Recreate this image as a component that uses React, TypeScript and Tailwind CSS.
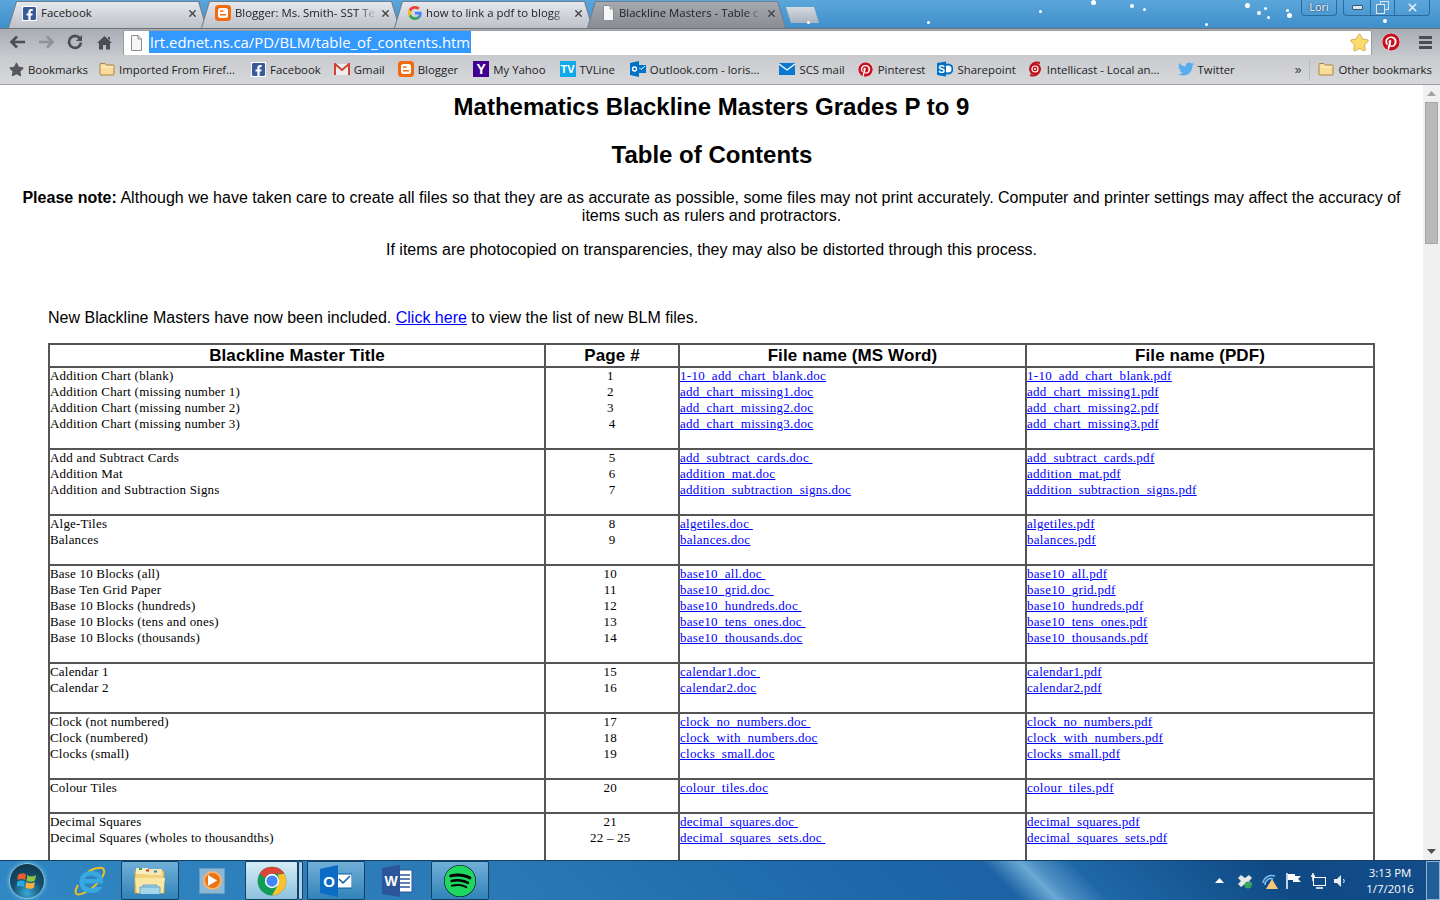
import React from 'react';
import { FaFacebookSquare, FaPinterest, FaTwitter, FaStar, FaSpotify } from 'react-icons/fa';
import { FaXmark } from 'react-icons/fa6';

type Row = { titles: string[]; pages: string[]; docs: string[]; pdfs: string[] };

const rows: Row[] = [
  {
    titles: ['Addition Chart (blank)', 'Addition Chart (missing number 1)', 'Addition Chart (missing number 2)', 'Addition Chart (missing number 3)'],
    pages: ['1 ', '2 ', '3 ', '4'],
    docs: ['1-10_add_chart_blank.doc', 'add_chart_missing1.doc', 'add_chart_missing2.doc', 'add_chart_missing3.doc'],
    pdfs: ['1-10_add_chart_blank.pdf', 'add_chart_missing1.pdf', 'add_chart_missing2.pdf', 'add_chart_missing3.pdf'],
  },
  {
    titles: ['Add and Subtract Cards', 'Addition Mat', 'Addition and Subtraction Signs'],
    pages: ['5', '6', '7'],
    docs: ['add_subtract_cards.doc ', 'addition_mat.doc', 'addition_subtraction_signs.doc'],
    pdfs: ['add_subtract_cards.pdf', 'addition_mat.pdf', 'addition_subtraction_signs.pdf'],
  },
  {
    titles: ['Alge-Tiles', 'Balances'],
    pages: ['8', '9'],
    docs: ['algetiles.doc ', 'balances.doc'],
    pdfs: ['algetiles.pdf', 'balances.pdf'],
  },
  {
    titles: ['Base 10 Blocks (all)', 'Base Ten Grid Paper', 'Base 10 Blocks (hundreds)', 'Base 10 Blocks (tens and ones)', 'Base 10 Blocks (thousands)'],
    pages: ['10 ', '11 ', '12 ', '13 ', '14 '],
    docs: ['base10_all.doc ', 'base10_grid.doc ', 'base10_hundreds.doc ', 'base10_tens_ones.doc ', 'base10_thousands.doc'],
    pdfs: ['base10_all.pdf', 'base10_grid.pdf', 'base10_hundreds.pdf', 'base10_tens_ones.pdf', 'base10_thousands.pdf'],
  },
  {
    titles: ['Calendar 1', 'Calendar 2'],
    pages: ['15 ', '16 '],
    docs: ['calendar1.doc ', 'calendar2.doc'],
    pdfs: ['calendar1.pdf', 'calendar2.pdf'],
  },
  {
    titles: ['Clock (not numbered)', 'Clock (numbered)', 'Clocks (small)'],
    pages: ['17 ', '18 ', '19 '],
    docs: ['clock_no_numbers.doc ', 'clock_with_numbers.doc', 'clocks_small.doc'],
    pdfs: ['clock_no_numbers.pdf', 'clock_with_numbers.pdf', 'clocks_small.pdf'],
  },
  {
    titles: ['Colour Tiles'],
    pages: ['20 '],
    docs: ['colour_tiles.doc'],
    pdfs: ['colour_tiles.pdf'],
  },
  {
    titles: ['Decimal Squares', 'Decimal Squares (wholes to thousandths)'],
    pages: ['21 ', '22 – 25 '],
    docs: ['decimal_squares.doc ', 'decimal_squares_sets.doc '],
    pdfs: ['decimal_squares.pdf', 'decimal_squares_sets.pdf'],
  },
];

const Folder = () => (
  <svg width="16" height="14" viewBox="0 0 16 14" className="shrink-0">
    <path d="M1 2.5 Q1 1.5 2 1.5 H6 L7.5 3 H14 Q15 3 15 4 V12 Q15 13 14 13 H2 Q1 13 1 12 Z" fill="#f9dc9a" stroke="#a8843f" />
    <path d="M1.5 5 H14.5" stroke="#fff3cf" />
  </svg>
);

const GoogleG = () => (
  <svg width="14" height="14" viewBox="0 0 48 48" className="shrink-0">
    <path fill="#EA4335" d="M24 9.5c3.5 0 6.7 1.3 9.2 3.6l6.8-6.8C35.900 2.400 30.500 0 24 0 14.600 0 6.500 5.400 2.600 13.200l8 6.200C12.400 13.600 17.700 9.500 24 9.500z" />
    <path fill="#4285F4" d="M46.900 24.500c0-1.600-.1-3.100-.4-4.500H24v9h12.900c-.6 3-2.200 5.500-4.700 7.200l7.700 6c4.500-4.200 7-10.300 7-17.700z" />
    <path fill="#FBBC05" d="M10.600 28.600c-.5-1.400-.8-3-.8-4.600s.3-3.200.8-4.600l-8-6.200C.9 16.500 0 20.100 0 24s.9 7.500 2.600 10.800l8-6.200z" />
    <path fill="#34A853" d="M24 48c6.500 0 11.900-2.100 15.900-5.800l-7.700-6c-2.200 1.500-4.900 2.300-8.200 2.300-6.300 0-11.600-4.100-13.400-9.900l-8 6.200C6.500 42.600 14.600 48 24 48z" />
  </svg>
);

const BloggerIcon = () => (
  <svg width="16" height="16" viewBox="0 0 16 16" className="shrink-0">
    <rect width="16" height="16" rx="3.500" fill="#f26a0f" />
    <rect x="3" y="3" width="10" height="10" rx="2.500" fill="#fff" />
    <rect x="5" y="5.300" width="3.500" height="1.500" fill="#f26a0f" />
    <rect x="5" y="9" width="6" height="1.500" fill="#f26a0f" />
  </svg>
);

const PageIcon = ({ size = 14 }: { size?: number }) => (
  <svg width={size} height={size + 2} viewBox="0 0 14 16" className="shrink-0">
    <path d="M2.500 .5 H9 L12.500 4 V15.500 H2.500 Z" fill="#f7f7f7" stroke="#8c8c8c" />
    <path d="M9 .5 V4 H12.500" fill="none" stroke="#8c8c8c" />
  </svg>
);

const GmailIcon = () => (
  <svg width="16" height="13" viewBox="0 0 16 13" className="shrink-0">
    <rect x="1" y="1" width="14" height="11" fill="#eee" />
    <path d="M1 12 V1 L8 7 L15 1 V12" fill="none" stroke="#d2402f" strokeWidth="2" />
  </svg>
);

const OutlookSmall = () => (
  <svg width="16" height="16" viewBox="0 0 16 16" className="shrink-0">
    <rect x="7" y="4" width="9" height="8" fill="#0072c6" />
    <path d="M9 6.500 L11 8.500 L15 5" stroke="#fff" fill="none" />
    <path d="M0 2 L9 0 V16 L0 14 Z" fill="#0072c6" />
    <circle cx="4.500" cy="8" r="2" fill="none" stroke="#fff" strokeWidth="1.400" />
  </svg>
);

const SharepointIcon = () => (
  <svg width="16" height="16" viewBox="0 0 16 16" className="shrink-0">
    <circle cx="11" cy="8" r="4.500" fill="#fff" stroke="#0072c6" strokeWidth="2" />
    <path d="M0 2 L9 .5 V15.500 L0 14 Z" fill="#0072c6" />
    <text x="4.500" y="11.500" textAnchor="middle" fontSize="10" fontWeight="700" fill="#fff" fontFamily="Liberation Sans, sans-serif">S</text>
  </svg>
);

const MailIcon = () => (
  <svg width="16" height="12" viewBox="0 0 16 12" className="shrink-0">
    <rect width="16" height="12" fill="#0a78d0" />
    <path d="M0 1 L8 7 L16 1" fill="none" stroke="#fff" strokeWidth="1.300" />
  </svg>
);

const TvLineIcon = () => (
  <div className="w-4 h-4 shrink-0 bg-[#12a9e8] text-white text-[11px] font-bold leading-4 text-center font-['Liberation_Sans',sans-serif]">TV</div>
);

const YahooIcon = () => (
  <div className="w-4 h-4 shrink-0 bg-[#400090] text-white text-[14px] font-bold leading-4 text-center font-['Liberation_Sans',sans-serif]">Y</div>
);

const IntellicastIcon = () => (
  <svg width="14" height="16" viewBox="0 0 14 16" className="shrink-0">
    <circle cx="7" cy="8" r="6" fill="#c1121c" />
    <path d="M12 2 Q6 0 3 5 M2 14 Q8 16 11 11" stroke="#c1121c" strokeWidth="2" fill="none" />
    <circle cx="7" cy="8" r="3" fill="none" stroke="#fff" strokeWidth="1.200" />
    <circle cx="7" cy="8" r="1" fill="#fff" />
  </svg>
);

const ChromeLogo = () => (
  <svg width="30" height="30" viewBox="0 0 48 48">
    <circle cx="24" cy="24" r="23" fill="#0f9d58" />
    <path d="M4.100 12.500 A23 23 0 0 1 43.900 12.500 L24 12.500 Q16 13 13 19 Z" fill="#db4437" />
    <path d="M43.900 12.500 A23 23 0 0 1 24 47 L34 29 Q37 20 33 14 Z" fill="#fbc02d" />
    <circle cx="24" cy="24" r="11.500" fill="#fff" />
    <circle cx="24" cy="24" r="9" fill="#4285f4" />
  </svg>
);

const StartOrb = () => (
  <div className="w-9 h-9 rounded-full border border-[#8fc3dd] bg-[radial-gradient(circle_at_50%_85%,#39a9d6_0%,#14506f_45%,#0f2f3f_100%)] flex items-center justify-center shadow-[0_0_4px_#6fc0e8]">
    <svg width="20" height="18" viewBox="0 0 20 18">
      <path d="M1 3 Q5 0 9 2.500 L8 8 Q4.500 6 .5 8 Z" fill="#f0592a" />
      <path d="M10.500 3 Q14 6 19 3 L18 8.500 Q13.500 11 9.500 8.500 Z" fill="#8cc63f" />
      <path d="M.3 9.500 Q4 7.500 7.700 9.500 L7 15 Q3.500 13 -.5 15 Z" fill="#29abe2" />
      <path d="M9.200 10 Q13.500 12.500 17.700 10 L17 15.500 Q13 18 8.300 15.500 Z" fill="#fbb03b" />
    </svg>
  </div>
);

const IeLogo = () => (
  <svg width="32" height="32" viewBox="0 0 32 32">
    <path d="M25 3 Q31 2 30 8 Q28 15 17 24 Q6 31 2.500 29 Q0 27 4 20" fill="none" stroke="#f0c020" strokeWidth="2" />
    <path d="M25 3 Q20 3 14 7" fill="none" stroke="#f0c020" strokeWidth="2" />
    <path d="M10 18.500 H29 Q29.500 6 18 6 Q6 6 5.500 17 Q6 28 18 28 Q25 28 28 22 H21 Q18.500 24 16 23 Q11 22 10 18.500 Z M10.500 14 Q12 10.500 17 10.500 Q22 10.500 23.500 14 Z" fill="#37a8e0" fillRule="evenodd" />
  </svg>
);

const ExplorerIcon = () => (
  <svg width="32" height="30" viewBox="0 0 32 30">
    <path d="M1 5 H30 V27 H1 Z" fill="#f2d37d" stroke="#c8a552" />
    <path d="M2 2 H14 V8 H2 Z" fill="#f9edc4" />
    <path d="M14 3 H28 V9 H14 Z" fill="#f6e6b0" />
    <rect x="5" y="2" width="3" height="2" fill="#3aa655" />
    <rect x="12" y="3.500" width="3" height="2" fill="#c8432f" />
    <rect x="20" y="4.500" width="3" height="2" fill="#3b84c9" />
    <path d="M1 12 H31 L29 27 H3 Z" fill="#fbe7a5" />
    <path d="M6 28 V21 H26 V28 M9 21 V19 H23 V21" fill="#a5d5ea" stroke="#6aa7c4" />
  </svg>
);

const MediaIcon = () => (
  <div className="w-[26px] h-[26px] bg-[#8ab8d8] border border-[#6a9abc] flex items-center justify-center">
    <div className="w-[19px] h-[19px] rounded-full bg-[#ea7415] border-2 border-[#f7b26e] flex items-center justify-center">
      <svg width="9" height="11" viewBox="0 0 9 11"><path d="M0 0 L9 5.500 L0 11 Z" fill="#fff" /></svg>
    </div>
  </div>
);

const OutlookBig = () => (
  <svg width="32" height="32" viewBox="0 0 32 32">
    <rect x="17" y="9" width="15" height="14" fill="#fff" stroke="#0a5ea8" />
    <path d="M19 14 L23 18 L30 11" fill="none" stroke="#0a5ea8" strokeWidth="1.500" />
    <path d="M0 4 L18 0 V32 L0 28 Z" fill="#0a6cc4" />
    <text x="9" y="21.500" textAnchor="middle" fontSize="15" fontWeight="700" fill="#fff" fontFamily="Liberation Sans, sans-serif">O</text>
  </svg>
);

const WordBig = () => (
  <svg width="32" height="32" viewBox="0 0 32 32">
    <rect x="15" y="5" width="15" height="22" fill="#fff" stroke="#2b579a" />
    <path d="M18 10 H28 M18 14 H28 M18 18 H28 M18 22 H28" stroke="#2b579a" strokeWidth="1.500" />
    <path d="M0 3 L18 0 V32 L0 29 Z" fill="#2b579a" />
    <text x="9" y="21" textAnchor="middle" fontSize="14" fontWeight="700" fill="#fff" fontFamily="Liberation Sans, sans-serif">W</text>
  </svg>
);

const Tab = ({ icon, label, active, fade }: { icon: React.ReactNode; label: string; active?: boolean; fade?: boolean }) => (
  <div className="w-[199px] -mr-[6px] h-[27px] shrink-0 bg-[#6f7f8f] [clip-path:polygon(0_100%,4%_0,96%_0,100%_100%)] relative">
    <div
      className={`absolute inset-x-px top-px bottom-0 [clip-path:polygon(0_100%,4%_0,96%_0,100%_100%)] flex items-center pb-[4px] pl-[13px] pr-[8px] gap-[4px] ${
        active ? 'bg-gradient-to-b from-[#a6a9af] to-[#898c93]' : 'bg-gradient-to-b from-[#e4e7ec] to-[#bec2c9]'
      }`}
    >
      {icon}
      <span
        className={`flex-1 whitespace-nowrap text-[11.4px] text-[#222] font-['Open_Sans',sans-serif] ${
          fade ? '[mask-image:linear-gradient(to_right,black_88%,transparent)]' : ''
        }`}
      >
        {label}
      </span>
      <FaXmark className="w-[11px] h-[11px] text-[#444] shrink-0" />
    </div>
  </div>
);

const Bookmark = ({ icon, label, className = '' }: { icon: React.ReactNode; label: string; className?: string }) => (
  <div className={`flex items-center gap-[4px] shrink-0 text-[11.4px] text-[#222] whitespace-nowrap font-['Open_Sans',sans-serif] ${className}`}>
    <div className="w-4 flex justify-center">{icon}</div>
    <span>{label}</span>
  </div>
);

const TaskButton = ({ children, active, w = 'w-[58px]' }: { children: React.ReactNode; active?: boolean; w?: string }) => (
  <div
    className={`${w} h-[39px] shrink-0 rounded-[2px] border border-[#143f66] flex items-center justify-center ${
      active ? 'bg-gradient-to-b from-[#d6edf8] to-[#8cc0de]' : 'bg-gradient-to-b from-[#70b0d8] to-[#2f82b8]'
    }`}
  >
    {children}
  </div>
);

const Stack = ({ items, center }: { items: string[]; center?: boolean }) => (
  <td className={`p-0 pb-[16px] align-top border-2 border-[#555] ${center ? 'text-center' : ''}`}>
    {items.map((t, i) => (
      <div key={i} className="h-[16px] leading-[16px] whitespace-pre">
        {t}
      </div>
    ))}
  </td>
);

const Links = ({ items }: { items: string[] }) => (
  <td className="p-0 pb-[16px] align-top border-2 border-[#555]">
    {items.map((t, i) => (
      <div key={i} className="h-[16px] leading-[16px] whitespace-pre tracking-[0.3px]">
        <a href="#" className="text-[#0000ff] underline">
          {t}
        </a>
      </div>
    ))}
  </td>
);

export default function App() {
  return (
    <div className="w-[1440px] h-[900px] overflow-hidden flex flex-col bg-white font-['Liberation_Sans',sans-serif]">
      {/* Chrome frame and tabs */}
      <div className="h-[28px] shrink-0 bg-gradient-to-b from-[#5ba6db] to-[#3f8fcb] flex items-end pl-[8px] relative">
        <Tab icon={<FaFacebookSquare className="w-[15px] h-[15px] text-[#3b5998] bg-white shrink-0" />} label="Facebook" />
        <Tab icon={<BloggerIcon />} label="Blogger: Ms. Smith- SST Te" fade />
        <Tab icon={<GoogleG />} label="how to link a pdf to blogg" fade />
        <Tab icon={<PageIcon />} label="Blackline Masters - Table c" active fade />
        <div className="ml-[6px] mb-[5px] w-[33px] h-[16px] bg-gradient-to-b from-[#d6dae0] to-[#a9b3bf] [clip-path:polygon(0_0,85%_0,100%_100%,15%_100%)]" />
        <div className="ml-auto self-start flex text-white mr-[10px]">
          <div className="w-[36px] h-[16px] mr-[6px] rounded-b-[4px] border border-t-0 border-[#2a6a9c] flex items-center justify-center text-[11px] font-['Open_Sans',sans-serif] text-[#f4f6f8] [text-shadow:0_0_2px_#223]">
            Lori
          </div>
          <div className="w-[87px] h-[16px] rounded-b-[4px] border border-t-0 border-[#2a6a9c] flex items-center">
            <div className="w-[26px] flex justify-center">
              <div className="w-[11px] h-[5px] bg-[#dde6ee] border border-[#38566f] rounded-[1px]" />
            </div>
            <div className="w-[25px] h-full border-x border-[#2a6a9c] flex items-center justify-center">
              <svg width="13" height="13" viewBox="0 0 13 13">
                <rect x="4.500" y=".5" width="8" height="8" fill="none" stroke="#dde6ee" />
                <rect x=".5" y="3.500" width="8" height="9" fill="#4d93c8" stroke="#dde6ee" />
              </svg>
            </div>
            <div className="flex-1 flex justify-center">
              <FaXmark className="w-[13px] h-[13px] text-[#e4eaf0]" />
            </div>
          </div>
        </div>
        {/* snow on the window frame */}
        <span className="absolute left-[807px] top-[21px] w-[3px] h-[3px] bg-white rounded-full" />
        <span className="absolute left-[927px] top-[21px] w-[3px] h-[3px] bg-white rounded-full" />
        <span className="absolute left-[1039px] top-[10px] w-[3px] h-[3px] bg-white rounded-full" />
        <span className="absolute left-[1091px] top-[0px] w-[5px] h-[5px] bg-white rounded-full" />
        <span className="absolute left-[1130px] top-[4px] w-[4px] h-[4px] bg-white rounded-full" />
        <span className="absolute left-[1143px] top-[8px] w-[3px] h-[3px] bg-white rounded-full" />
        <span className="absolute left-[1205px] top-[23px] w-[3px] h-[3px] bg-white rounded-full" />
        <span className="absolute left-[1245px] top-[3px] w-[5px] h-[5px] bg-white rounded-full" />
        <span className="absolute left-[1257px] top-[11px] w-[4px] h-[4px] bg-white rounded-full" />
        <span className="absolute left-[1264px] top-[7px] w-[3px] h-[3px] bg-white rounded-full" />
        <span className="absolute left-[1267px] top-[16px] w-[3px] h-[3px] bg-white rounded-full" />
        <span className="absolute left-[1286px] top-[9px] w-[3px] h-[3px] bg-white rounded-full" />
        <span className="absolute left-[1287px] top-[13px] w-[5px] h-[5px] bg-white rounded-full" />
        <span className="absolute left-[1383px] top-[19px] w-[4px] h-[4px] bg-white rounded-full" />
      </div>

      {/* Toolbar */}
      <div className="h-[27px] shrink-0 border-t border-[#6c7278] bg-gradient-to-b from-[#a9adb4] to-[#c4c7cc] flex items-center pl-[9px] pr-[8px]">
        <div className="w-[114px] flex items-center gap-[12px] shrink-0">
          <svg width="17" height="14" viewBox="0 0 17 14">
            <path d="M16 7 H3 M8 1.500 L2.500 7 L8 12.500" fill="none" stroke="#4a4e54" strokeWidth="2.600" />
          </svg>
          <svg width="17" height="14" viewBox="0 0 17 14">
            <path d="M1 7 H14 M9 1.500 L14.500 7 L9 12.500" fill="none" stroke="#8f9297" strokeWidth="2.600" />
          </svg>
          <svg width="16" height="16" viewBox="0 0 16 16">
            <path d="M13 4.500 A6 6 0 1 0 14 8.500" fill="none" stroke="#4a4e54" strokeWidth="2.600" />
            <path d="M15 1 V7 H9 Z" fill="#4a4e54" />
          </svg>
          <svg width="15" height="15" viewBox="0 0 15 15" className="ml-[2px]">
            <path d="M7.500 1 L15 8 H13 V14.500 H9 V10 H6 V14.500 H2 V8 H0 Z M11 2 H13 V5 L11 3.500 Z" fill="#4a4e54" />
          </svg>
        </div>
        <div className="w-[1249px] h-[26px] -mb-px shrink-0 bg-white rounded-[2px] border border-[#9a9da2] flex items-center pl-[5px] pr-[2px]">
          <PageIcon />
          <span className="ml-[6px] -mt-[1px] h-[22px] leading-[22px] px-[1px] bg-[#3399ff] text-white text-[14.9px] font-['Open_Sans',sans-serif] whitespace-nowrap">
            lrt.ednet.ns.ca/PD/BLM/table_of_contents.htm
          </span>
          <FaStar className="ml-auto w-[19px] h-[19px] text-[#fbdc6b] stroke-[#b9912e] stroke-[20px]" />
        </div>
        <FaPinterest className="ml-[10px] w-[18px] h-[18px] text-[#c8101e] bg-white rounded-full shrink-0" />
        <div className="ml-[19px] flex flex-col gap-[2px] w-[13px] shrink-0">
          <div className="h-[3px] bg-[#4a4e54]" />
          <div className="h-[3px] bg-[#4a4e54]" />
          <div className="h-[3px] bg-[#4a4e54]" />
        </div>
      </div>

      {/* Bookmarks bar */}
      <div className="h-[30px] shrink-0 bg-gradient-to-b from-[#c8cace] to-[#d6d8dc] border-b border-[#9c9ea2] flex items-center pl-[8px] pr-[8px]">
        <div className="flex items-center flex-1">
          <Bookmark icon={<FaStar className="w-[15px] h-[15px] text-[#55585c]" />} label="Bookmarks" />
          <Bookmark className="ml-[11px]" icon={<Folder />} label="Imported From Firef..." />
          <Bookmark className="ml-[15px]" icon={<FaFacebookSquare className="w-[15px] h-[15px] text-[#3b5998] bg-white" />} label="Facebook" />
          <Bookmark className="ml-[13px]" icon={<GmailIcon />} label="Gmail" />
          <Bookmark className="ml-[13px]" icon={<BloggerIcon />} label="Blogger" />
          <Bookmark className="ml-[15px]" icon={<YahooIcon />} label="My Yahoo" />
          <Bookmark className="ml-[14px]" icon={<TvLineIcon />} label="TVLine" />
          <Bookmark className="ml-[15px]" icon={<OutlookSmall />} label="Outlook.com - loris..." />
          <Bookmark className="ml-[20px]" icon={<MailIcon />} label="SCS mail" />
          <Bookmark className="ml-[13px]" icon={<FaPinterest className="w-[15px] h-[15px] text-[#c8101e] bg-white rounded-full" />} label="Pinterest" />
          <Bookmark className="ml-[12px]" icon={<SharepointIcon />} label="Sharepoint" />
          <Bookmark className="ml-[11px]" icon={<IntellicastIcon />} label="Intellicast - Local an..." />
          <Bookmark className="ml-[18px]" icon={<FaTwitter className="w-[16px] h-[16px] text-[#55acee]" />} label="Twitter" />
        </div>
        <span className="text-[12px] text-[#333] mr-[8px]">»</span>
        <div className="border-l border-[#bbbdc1] pl-[8px] h-[22px] flex items-center">
          <Bookmark icon={<Folder />} label="Other bookmarks" />
        </div>
      </div>

      {/* Page with scrollbar */}
      <div className="flex-1 min-h-0 flex">
        <div className="w-[1423px] overflow-hidden text-black">
          <h1 className="mt-[8px] text-[24px] leading-[28px] font-bold text-center">Mathematics Blackline Masters Grades P to 9</h1>
          <h2 className="mt-[20px] ml-[1px] text-[24px] leading-[28px] font-bold text-center">Table of Contents</h2>
          <p className="mt-[20px] mx-[8px] text-[16px] leading-[18px] text-center tracking-[0.015px]">
            <b>Please note:</b> Although we have taken care to create all files so that they are as accurate as possible, some files may not print accurately. Computer and printer settings may affect the accuracy of items such as rulers and protractors.
          </p>
          <p className="mt-[16px] text-[16px] leading-[18px] text-center">If items are photocopied on transparencies, they may also be distorted through this process.</p>
          <p className="mt-[50px] ml-[48px] text-[16px] leading-[18px]">
            New Blackline Masters have now been included.{' '}
            <a href="#" className="text-[#0000ff] underline">Click here</a> to view the list of new BLM files.
          </p>
          <table className="mt-[16px] ml-[48px] w-[1326px] table-fixed border-collapse border-2 border-[#555] font-['Liberation_Serif',serif] text-[13px] tracking-[0.2px]">
            <colgroup>
              <col className="w-[496px]" />
              <col className="w-[134px]" />
              <col className="w-[347px]" />
              <col className="w-[348px]" />
            </colgroup>
            <thead>
              <tr className="h-[23px] font-['Liberation_Sans',sans-serif] text-[17px] tracking-[0.1px]">
                {['Blackline Master Title', 'Page #', 'File name (MS Word)', 'File name (PDF)'].map((h) => (
                  <th key={h} className="p-0 border-2 border-[#555] font-bold text-center leading-[20px]">{h}</th>
                ))}
              </tr>
            </thead>
            <tbody>
              {rows.map((r, i) => (
                <tr key={i}>
                  <Stack items={r.titles} />
                  <Stack items={r.pages} center />
                  <Links items={r.docs} />
                  <Links items={r.pdfs} />
                </tr>
              ))}
            </tbody>
          </table>
        </div>
        <div className="w-[17px] shrink-0 bg-[#f0f0f0] flex flex-col items-center">
          <div className="h-[17px] flex items-center justify-center">
            <svg width="9" height="5" viewBox="0 0 9 5"><path d="M0 5 L4.500 0 L9 5 Z" fill="#a3a3a3" /></svg>
          </div>
          <div className="w-[13px] h-[142px] bg-[#b9b9b9] border border-[#a6a6a6]" />
          <div className="mt-auto h-[17px] flex items-center justify-center">
            <svg width="9" height="5" viewBox="0 0 9 5"><path d="M0 0 L4.500 5 L9 0 Z" fill="#505050" /></svg>
          </div>
        </div>
      </div>

      {/* Windows taskbar */}
      <div className="h-[40px] shrink-0 border-t border-[#143f66] bg-[linear-gradient(45deg,#3087c3_0%,#2a79b5_35%,#1d66a8_62%,#1c63a5_69%,#6aa8d4_71.500%,#4d8fc2_72.500%,#1f68a8_75%,#104a85_88%,#124d8a_100%)] flex items-center pl-[9px] text-white">
        <StartOrb />
        <div className="ml-[29px] w-[32px] flex justify-center"><IeLogo /></div>
        <div className="ml-[15px] flex items-center">
          <TaskButton><ExplorerIcon /></TaskButton>
          <div className="w-[66px] flex justify-center"><MediaIcon /></div>
          <TaskButton active w="w-[53px]"><ChromeLogo /></TaskButton>
          <div className="w-[5px] h-[39px] border border-[#143f66] rounded-[2px] bg-[#a8d0e8]" />
          <div className="w-[4px]" />
          <TaskButton><OutlookBig /></TaskButton>
          <div className="w-[66px] flex justify-center"><WordBig /></div>
          <TaskButton><FaSpotify className="w-[32px] h-[32px] text-[#1ed760] bg-black rounded-full" /></TaskButton>
        </div>
        <div className="ml-auto flex items-center">
          <svg width="9" height="5" viewBox="0 0 9 5" className="mr-[13px]"><path d="M0 5 L4.500 0 L9 5 Z" fill="#fff" /></svg>
          <svg width="16" height="16" viewBox="0 0 16 16" className="mr-[9px]">
            <path d="M4 2 L8 5 L12 2 L15 5 L12 8 L15 11 L12 14 L8 11 L4 14 L1 11 L4 8 L1 5 Z" fill="#e8e8e8" />
            <circle cx="11" cy="12" r="3.500" fill="#3aa655" />
          </svg>
          <svg width="16" height="16" viewBox="0 0 16 16" className="mr-[8px]">
            <path d="M1 10 A9 9 0 0 1 13 3 M3 12 A6 6 0 0 1 11 6" fill="none" stroke="#7fc0ee" strokeWidth="1.500" />
            <path d="M10 6 L16 16 H4 Z" fill="#f5c77a" />
          </svg>
          <svg width="15" height="16" viewBox="0 0 15 16" className="mr-[9px]">
            <path d="M1 0 V16" stroke="#fff" strokeWidth="1.500" />
            <path d="M2 1 H9 V3 L15 3 L12 6 L15 9 H7 V7 H2 Z" fill="#fff" />
          </svg>
          <svg width="16" height="16" viewBox="0 0 16 16" className="mr-[8px]">
            <rect x="3.500" y="4.500" width="12" height="8" fill="none" stroke="#fff" />
            <path d="M3 0 V8 M1 3 H5 M6 15 H13" stroke="#fff" strokeWidth="1.500" />
          </svg>
          <svg width="14" height="14" viewBox="0 0 14 14" className="mr-[12px]">
            <path d="M0 5 H3 L7 1 V13 L3 9 H0 Z" fill="#e8eef4" />
            <path d="M9.500 5 Q11 7 9.500 9" fill="none" stroke="#e8eef4" />
          </svg>
          <div className="w-[60px] pt-[1px] text-center text-[11.4px] leading-[16px] font-['Open_Sans',sans-serif]">
            <div>3:13 PM</div>
            <div>1/7/2016</div>
          </div>
          <div className="ml-[6px] w-[14px] h-[39px] border border-[#8fb5d3] bg-[#2a6aa2]/60" />
        </div>
      </div>
    </div>
  );
}
